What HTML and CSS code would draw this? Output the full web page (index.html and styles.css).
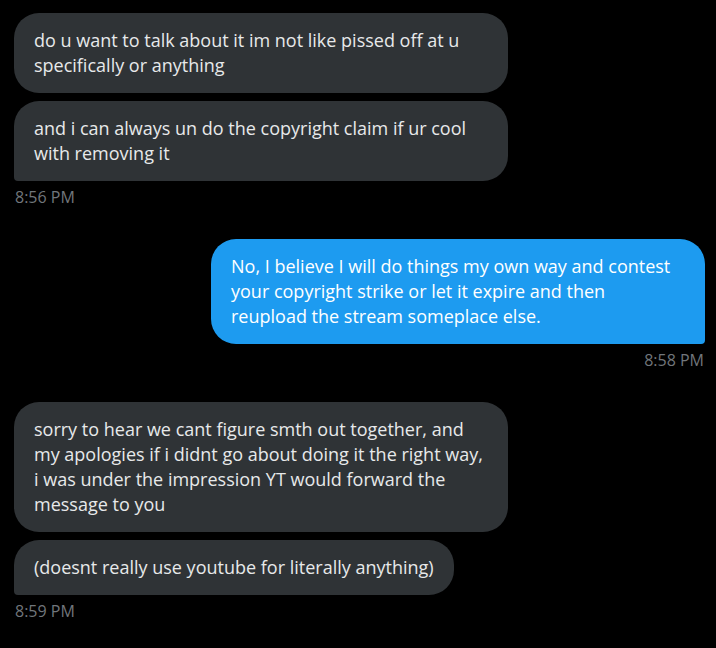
FILE: index.html
```html
<!DOCTYPE html>
<html lang="en">
<head>
    <meta charset="UTF-8">
    <title>Messages</title>
    <link rel="stylesheet" href="styles.css">
</head>
<body>
<div class="chat">
    <!--对方消息-->
    <div class="group in">
        <div class="bubble">do u want to talk about it im not like pissed off at u specifically or anything</div>
        <div class="bubble last">and i can always un do the copyright claim if ur cool with removing it</div>
        <div class="time">8:56 PM</div>
    </div>
    <!--自己的消息-->
    <div class="group out">
        <div class="bubble last">No, I believe I will do things my own way and contest your copyright strike or let it expire and then reupload the stream someplace else.</div>
        <div class="time">8:58 PM</div>
    </div>
    <div class="group in">
        <div class="bubble">sorry to hear we cant figure smth out together, and my apologies if i didnt go about doing it the right way, i was under the impression YT would forward the message to you</div>
        <div class="bubble last">(doesnt really use youtube for literally anything)</div>
        <div class="time">8:59 PM</div>
    </div>
</div>
</body>
</html>
```
FILE: styles.css
```css
html, body {
    margin: 0;
    padding: 0;
    background: #000;
}

.chat {
    padding: 13px 11px 0 14px;
    font-family: "Open Sans", "Noto Sans", sans-serif;
    display: flex;
    flex-direction: column;
    gap: 32px;
}

.group {
    display: flex;
    flex-direction: column;
    gap: 8px;
}

.group.in {
    align-items: flex-start;
}

.group.out {
    align-items: flex-end;
}

.bubble {
    max-width: 494px;
    box-sizing: border-box;
    padding: 15px 20px;
    border-radius: 25px;
    font-size: 18px;
    line-height: 25px;
    color: #e7e9ea;
    background: #2f3336;
}

.in .bubble.last {
    border-bottom-left-radius: 4px;
}

.out .bubble {
    background: #1d9bf0;
    color: #fff;
}

.out .bubble.last {
    border-bottom-right-radius: 4px;
}

.time {
    margin-top: -2px;
    font-size: 16px;
    line-height: 20px;
    color: #71767b;
    padding: 0 1px;
}
```
